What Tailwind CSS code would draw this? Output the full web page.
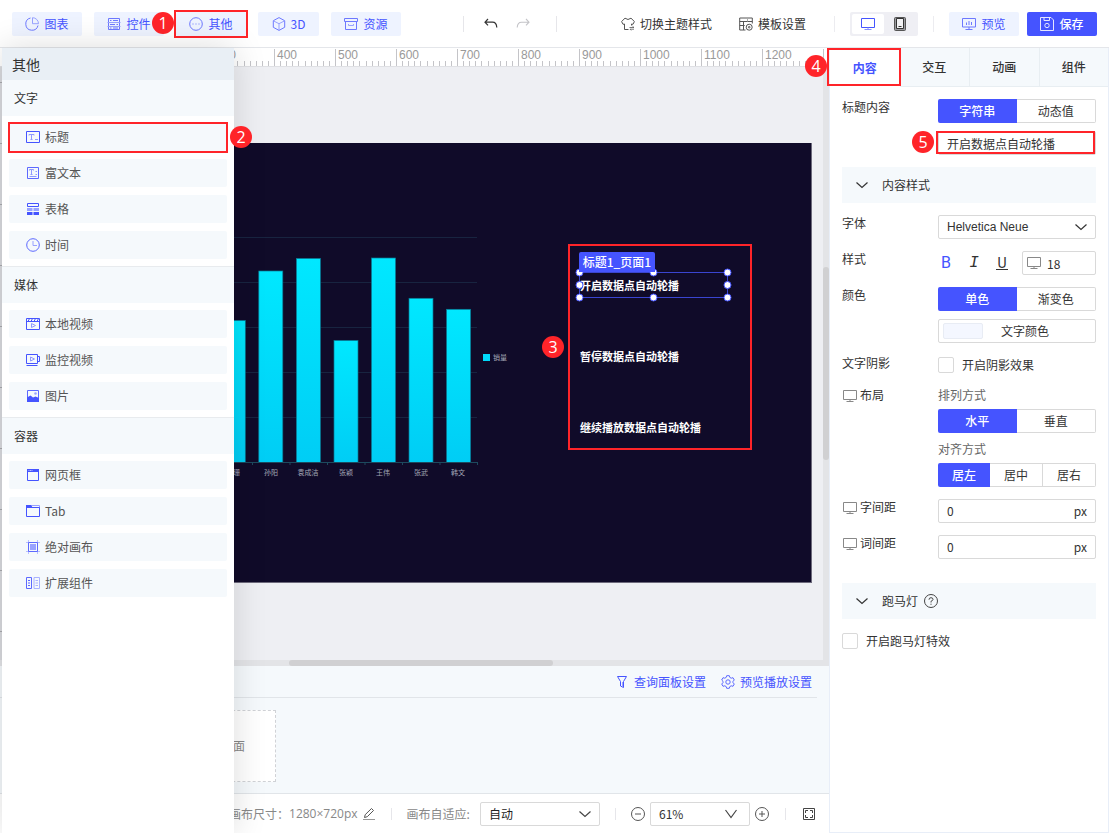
<!DOCTYPE html>
<html lang="zh-CN">
<head>
    <meta charset="UTF-8">
    <meta name="viewport" content="width=device-width, initial-scale=1.0">
    <title>大屏编辑器</title>
    <script src="https://cdn.jsdelivr.net/npm/@tailwindcss/browser@4"></script>
</head>
<body class="h-screen flex flex-col overflow-hidden bg-white text-xs leading-4 text-[#333] font-['Noto_Sans_CJK_SC',sans-serif]">

    <!-- Top toolbar -->
    <header class="h-12 shrink-0 flex items-center px-3 border-b border-[#e4e6ea]">
        <nav class="flex gap-3">
            <button class="w-[70px] h-6 flex items-center justify-center gap-[5px] rounded-xs bg-[#eef3ff] text-[#4554ff]">
                <svg class="size-[14px]" viewBox="0 0 14 14" fill="none" stroke="#6d78ff"><path d="M5.500 1A6.200 6.200 0 1 0 13 8.500"/><path d="M7.500.7v6h6A6 6 0 0 0 7.500.7z" stroke="#98a2ff"/></svg>
                图表
            </button>
            <button class="w-[70px] h-6 flex items-center justify-center gap-[5px] rounded-xs bg-[#eef3ff] text-[#4554ff]">
                <svg class="size-[14px]" viewBox="0 0 14 14" fill="none" stroke="#6d78ff"><path d="M1.500 1.500h11v11h-11z"/><path d="M.5 5.500h13M.5 9.500h13" stroke="#98a2ff"/><path d="M3 3.500h1.500M6 3.500h5M3 7.500h5M9.500 7.500H11M3 11h1.500M6 11h5"/></svg>
                控件
            </button>
            <div class="relative">
                <button class="w-[70px] h-6 flex items-center justify-center gap-[5px] rounded-xs bg-[#eef3ff] text-[#4554ff]">
                    <svg class="size-[14px]" viewBox="0 0 14 14" fill="none" stroke="#6d78ff"><circle cx="7" cy="7" r="6.300"/><path d="M3.500 7h1M6.500 7h1M9.500 7h1"/></svg>
                    其他
                </button>
                <span class="absolute -inset-0.5 border-2 border-[#ff2429] pointer-events-none"></span>
                <span class="absolute right-[72px] top-0 size-[22px] rounded-full bg-[#ff2429] text-white text-base leading-[22px] text-center font-['Open_Sans',sans-serif]">1</span>
            </div>
            <button class="w-[61px] h-6 flex items-center justify-center gap-[5px] rounded-xs bg-[#eef3ff] text-[#4554ff]">
                <svg class="size-[14px]" viewBox="0 0 14 14" fill="none" stroke="#6d78ff"><path d="M7 .6l5.700 3.100v6.600L7 13.400 1.300 10.300V3.700z"/><path d="M1.500 3.900L7 6.700l5.500-2.800M7 6.700v6.500" stroke="#98a2ff"/></svg>
                3D
            </button>
            <button class="w-[70px] h-6 flex items-center justify-center gap-[5px] rounded-xs bg-[#eef3ff] text-[#4554ff]">
                <svg class="size-[14px]" viewBox="0 0 14 14" fill="none" stroke="#6d78ff"><path d="M.5 1.500h13v3H.5z"/><path d="M1.500 4.500v8h11v-8"/><path d="M4.500 7v1.500h5V7" stroke="#98a2ff"/></svg>
                资源
            </button>
        </nav>

        <span class="ml-[62px] w-px h-4 bg-[#e6e6ea]"></span>
        <button class="ml-5" aria-label="撤销"><svg class="size-[14px]" viewBox="0 0 14 14" fill="none" stroke="#333" stroke-width="1.200"><path d="M4 2L1 5.200l3 3.200M1 5.200h7.500q4 0 4.300 5.300"/></svg></button>
        <button class="ml-[18px]" aria-label="重做"><svg class="size-[14px]" viewBox="0 0 14 14" fill="none" stroke="#c4c4c8" stroke-width="1.100"><path d="M10 2l3 3.200-3 3.200M13 5.200H5.500q-4 0-4.300 5.300"/></svg></button>
        <span class="ml-[26px] w-px h-4 bg-[#e6e6ea]"></span>

        <div class="ml-auto flex items-center">
            <button class="flex items-center gap-[5px]">
                <svg class="size-[14px]" viewBox="0 0 14 14" fill="none" stroke="#555"><path d="M7.500 12.500h-4V7L2 7.300.6 4.500 4 1.200Q7 3.800 10 1.200l3.400 3.300L12 7.300 10.500 7v1.500"/><path d="M8.500 10.500h4.500l-1.500-1.300M13 12.200H9l1.200 1.200" stroke-width=".8"/></svg>
                切换主题样式
            </button>
            <button class="ml-[27px] flex items-center gap-[5px]">
                <svg class="size-[14px]" viewBox="0 0 14 14" fill="none" stroke="#555"><path d="M6.500 13H.7V1h12.600v5.500M.7 4.500h12.600M4.500 4.500V13M.7 8.500h5"/><path d="M8.500 1v3.500" stroke="#aaa"/><circle cx="10.200" cy="10.200" r="3"/><circle cx="10.200" cy="10.200" r=".8"/></svg>
                模板设置
            </button>
            <span class="ml-7 w-px h-4 bg-[#ececf0]"></span>
            <div class="ml-[15px] h-6 w-[68px] p-0.5 flex rounded-xs bg-[#efeff4]">
                <button class="w-8 flex items-center justify-center rounded-xs bg-white" aria-label="桌面端"><svg class="size-[14px]" viewBox="0 0 14 14" fill="none" stroke="#4554ff"><path d="M.5 1.500h13v9H.5z"/><path d="M7 10.500v2M3.500 12.500h7" stroke="#8791ff"/></svg></button>
                <button class="w-8 flex items-center justify-center" aria-label="移动端"><svg class="size-[14px]" viewBox="0 0 14 14" fill="none" stroke="#555"><rect x="1.500" y=".5" width="11" height="13" rx="1" fill="#9a9a9e"/><path d="M3.500 1.500h7v10h-7z" fill="#f2f2f4" stroke="#333"/><path d="M5.500 9.500h3" stroke="#333"/></svg></button>
            </div>
            <span class="ml-[15px] w-px h-4 bg-[#ececf0]"></span>
            <button class="ml-[15px] w-[70px] h-6 flex items-center justify-center gap-[5px] rounded-xs bg-[#eef3ff] text-[#4554ff]">
                <svg class="size-[14px]" viewBox="0 0 14 14" fill="none" stroke="#6d78ff"><path d="M.5 1.500h13v8.500H.5zM7 10v2.500M3.500 12.500h7"/><path d="M4.500 5.500v2.500M7 4v4M9.500 5v3"/></svg>
                预览
            </button>
            <button class="ml-2 w-[70px] h-6 flex items-center justify-center gap-[5px] rounded-xs bg-[#4554ff] text-white font-medium">
                <svg class="size-[14px]" viewBox="0 0 14 14" fill="none" stroke="#e4e6ff"><path d="M.5.5H11L13.500 3v10.500H.5z"/><path d="M4 .5V3.500h5.500V.5"/><circle cx="7" cy="8.500" r="2.200"/></svg>
                保存
            </button>
        </div>
    </header>

    <div class="relative flex-1 min-h-0 flex">

        <!-- Component menu, opened over the canvas -->
        <aside class="absolute z-10 left-0.5 top-0 bottom-0 w-[232px] bg-white shadow-[0_0_32px_rgba(0,0,0,0.14)]">
            <h2 class="h-8 flex items-center pl-2.5 bg-[#e9eff5] text-sm">其他</h2>
            <section class="pb-[7px] border-b border-[#e8ebee]">
                <h3 class="h-9 flex items-center pl-3 bg-[#f5f9fc]">文字</h3>
                <ul class="mt-[7px] mx-[7px] flex flex-col gap-2 text-[#555]">
                    <li class="relative">
                        <button class="w-full h-7 flex items-center gap-[5px] pl-[17px] rounded-xs bg-[#f5f9fc]">
                            <svg class="size-[14px]" viewBox="0 0 14 14" fill="none" stroke="#4554ff"><path d="M.5 1.500h13v11H.5z"/><path d="M3 5.500v-1h5v1M5.500 4.500v5M4.500 9.500h2M9 9.500h3" stroke="#8f99ff"/></svg>
                            标题
                        </button>
                        <span class="absolute -left-px -right-px -top-px -bottom-0.5 border-2 border-[#ff2429] pointer-events-none"></span>
                        <span class="absolute left-[221px] top-[3px] size-[22px] rounded-full bg-[#ff2429] text-white text-base leading-[22px] text-center font-['Open_Sans',sans-serif]">2</span>
                    </li>
                    <li><button class="w-full h-7 flex items-center gap-[5px] pl-[17px] rounded-xs bg-[#f5f9fc]">
                        <svg class="size-[14px]" viewBox="0 0 14 14" fill="none" stroke="#5d69ff"><path d="M1.500 1.500h11v11h-11z"/><path d="M3.500 4.500v-1h4v1M5.500 3.500v5M4.500 8.500h2M9.500 5.500h1.500M9.500 8.500h1.500M3.500 10.500h7" stroke="#8f99ff"/></svg>
                        富文本
                    </button></li>
                    <li><button class="w-full h-7 flex items-center gap-[5px] pl-[17px] rounded-xs bg-[#f5f9fc]">
                        <svg class="size-[14px]" viewBox="0 0 14 14"><path d="M1.500 1.500h11v3h-11z" fill="none" stroke="#4554ff"/><path d="M1 6h5.500v3H1zM7.500 6H13v3H7.500z" fill="#98a2ff"/><path d="M1 10h5.500v3H1zM7.500 10H13v3H7.500z" fill="#4554ff"/></svg>
                        表格
                    </button></li>
                    <li><button class="w-full h-7 flex items-center gap-[5px] pl-[17px] rounded-xs bg-[#f5f9fc]">
                        <svg class="size-[14px]" viewBox="0 0 14 14" fill="none" stroke="#5d69ff"><circle cx="7" cy="7" r="6.300"/><path d="M7 3v4.500h4" stroke="#98a2ff"/></svg>
                        时间
                    </button></li>
                </ul>
            </section>
            <section class="pb-[7px] border-b border-[#e8ebee]">
                <h3 class="h-9 flex items-center pl-3 bg-[#f5f9fc]">媒体</h3>
                <ul class="mt-[7px] mx-[7px] flex flex-col gap-2 text-[#555]">
                    <li><button class="w-full h-7 flex items-center gap-[5px] pl-[17px] rounded-xs bg-[#f5f9fc]">
                        <svg class="size-[14px]" viewBox="0 0 14 14" fill="none" stroke="#4554ff"><path d="M.5 1.500h13v11H.5zM.5 4.500h13M2 4.500l1.500-3M5 4.500l1.500-3M8 4.500l1.500-3M11 4.500l1.500-3"/><path d="M5.500 6.500l4 2-4 2z" stroke="#8f99ff"/></svg>
                        本地视频
                    </button></li>
                    <li><button class="w-full h-7 flex items-center gap-[5px] pl-[17px] rounded-xs bg-[#f5f9fc]">
                        <svg class="size-[14px]" viewBox="0 0 14 14" fill="none" stroke="#4554ff"><path d="M.5 1.500h11v9H.5zM11.500 3.500h2v5h-2M.5 12.500h11"/><path d="M4.500 4l4 2-4 2z" stroke="#8f99ff"/></svg>
                        监控视频
                    </button></li>
                    <li><button class="w-full h-7 flex items-center gap-[5px] pl-[17px] rounded-xs bg-[#f5f9fc]">
                        <svg class="size-[14px]" viewBox="0 0 14 14"><path d="M1.500 1.500h11v11h-11z" fill="none" stroke="#5d69ff"/><path d="M1 8.500L4.500 6.500 7 8.500l2.500-1L13 9v4H1z" fill="#4554ff"/><circle cx="9.500" cy="4.500" r="1.300" fill="#98a2ff"/></svg>
                        图片
                    </button></li>
                </ul>
            </section>
            <section>
                <h3 class="h-9 flex items-center pl-3 bg-[#f5f9fc]">容器</h3>
                <ul class="mt-[7px] mx-[7px] flex flex-col gap-2 text-[#555]">
                    <li><button class="w-full h-7 flex items-center gap-[5px] pl-[17px] rounded-xs bg-[#f5f9fc]">
                        <svg class="size-[14px]" viewBox="0 0 14 14"><path d="M1.500 1.500h11v11h-11z" fill="none" stroke="#4554ff"/><path d="M1 1h12v3H1z" fill="#4554ff"/><path d="M2.500 2.500h4" stroke="#b9c0ff" stroke-dasharray="1 .5"/></svg>
                        网页框
                    </button></li>
                    <li><button class="w-full h-7 flex items-center gap-[5px] pl-[17px] rounded-xs bg-[#f5f9fc]">
                        <svg class="size-[14px]" viewBox="0 0 14 14"><path d="M6 1.500h7.500V4" fill="none" stroke="#98a2ff"/><path d="M.5 3.500h13v9H.5z" fill="none" stroke="#4554ff"/><path d="M0 1h5.500l1 3H0z" fill="#4554ff"/></svg>
                        Tab
                    </button></li>
                    <li><button class="w-full h-7 flex items-center gap-[5px] pl-[17px] rounded-xs bg-[#f5f9fc]">
                        <svg class="size-[14px]" viewBox="0 0 14 14"><path d="M2.500 0v14M11.500 0v14M0 2.500h14M0 11.500h14" stroke="#b9c0ff"/><path d="M2.500 2.500h9v9h-9z" fill="#f5f9fc" stroke="#5d69ff"/><path d="M4 4h6v6H4z" fill="#98a2ff"/></svg>
                        绝对画布
                    </button></li>
                    <li><button class="w-full h-7 flex items-center gap-[5px] pl-[17px] rounded-xs bg-[#f5f9fc]">
                        <svg class="size-[14px]" viewBox="0 0 14 14" fill="none"><path d="M.5 1.500h5v11h-5zM2 4.500h2M2 7h2M2 9.500h2" stroke="#5d69ff"/><path d="M8 1.500h5.500v11H8zM9.500 4.500H12M9.500 7H12M9.500 9.500H12" stroke="#a9b2ff"/></svg>
                        扩展组件
                    </button></li>
                </ul>
            </section>
        </aside>

        <!-- Canvas column -->
        <main class="relative flex-1 min-w-0 flex flex-col">
            <div class="h-[19px] shrink-0 overflow-hidden border-b border-[#dfe0e4] bg-white">
                <svg id="ruler" class="h-full w-full font-['Liberation_Sans',sans-serif]" fill="#999"></svg>
            </div>

            <div class="relative flex-1 min-h-0 overflow-hidden bg-[#eeeff3]">
                <!-- left ruler edge -->
                <div class="absolute left-0 inset-y-0 w-0.5 bg-[repeating-linear-gradient(to_bottom,#d9dade_0_15px,#a9aaae_15px_16px,#d9dade_16px_61px)]"></div>

                <div class="absolute left-[31px] top-[76px] w-[781px] h-[440px] bg-[#100b29] border-r border-b border-[#6d6a7c]">
                    <svg class="absolute left-0 top-0 w-[781px] h-[439px]" viewBox="31 143 781 439" font-size="7" fill="#a3a6b5" text-anchor="middle">
                        <defs>
                            <linearGradient id="bar" x1="0" y1="0" x2="0" y2="1"><stop offset="0" stop-color="#00e8ff"/><stop offset="1" stop-color="#00cdf5"/></linearGradient>
                        </defs>
                        <g stroke="#182440"><path d="M60 237.500h417M60 282.500h417M60 327.500h417M60 372.500h417M60 417.500h417"/></g>
                        <g fill="url(#bar)" stroke="#087a94" stroke-width=".7">
                            <rect x="221.300" y="320.500" width="24" height="142"/>
                            <rect x="258.800" y="271" width="24" height="191.500"/>
                            <rect x="296.400" y="258.500" width="24" height="204"/>
                            <rect x="334" y="340.500" width="24" height="122"/>
                            <rect x="371.500" y="258" width="24" height="204.500"/>
                            <rect x="409" y="298.300" width="24" height="164.200"/>
                            <rect x="446.600" y="309.300" width="24" height="153.200"/>
                        </g>
                        <path d="M60 462.500h417.500M252.500 462v3M290 462v3M327.500 462v3M365 462v3M402.500 462v3M440 462v3M477.500 462v3" fill="none" stroke="#1d4a5e"/>
                        <text x="233" y="475">李珊</text>
                        <text x="271" y="475">孙阳</text>
                        <text x="308" y="475">袁成洁</text>
                        <text x="346" y="475">张颖</text>
                        <text x="383" y="475">王伟</text>
                        <text x="421" y="475">张武</text>
                        <text x="458" y="475">韩文</text>
                        <rect x="483" y="354" width="7" height="7" fill="#00d9fa"/>
                        <text x="500" y="360">销量</text>
                    </svg>

                    <div class="absolute left-[537px] top-[101px] w-[184px] h-[206px] border-2 border-[#ff2429]"></div>
                    <span class="absolute left-[511px] top-[193px] size-[22px] rounded-full bg-[#ff2429] text-white text-base leading-[22px] text-center font-['Open_Sans',sans-serif]">3</span>

                    <div class="absolute left-[548px] top-[129px] w-[149px] h-[26px] border border-[#3a45d0] text-[11px] leading-6 font-bold text-white">
                        开启数据点自动轮播
                        <svg class="absolute -left-1 -top-1 w-[155px] h-8 overflow-visible" fill="#fff" stroke="#4554ff"><circle cx="3.500" cy="3.500" r="3.500"/><circle cx="77.500" cy="3.500" r="3.500"/><circle cx="151.500" cy="3.500" r="3.500"/><circle cx="3.500" cy="16" r="3.500"/><circle cx="151.500" cy="16" r="3.500"/><circle cx="3.500" cy="28.500" r="3.500"/><circle cx="77.500" cy="28.500" r="3.500"/><circle cx="151.500" cy="28.500" r="3.500"/></svg>
                    </div>
                    <span class="absolute left-[548px] top-[109px] h-5 w-[76px] text-center leading-5 rounded-t-xs bg-[#4554ff] text-white font-medium">标题1_页面1</span>
                    <p class="absolute left-[549px] top-[205px] text-[11px] font-bold text-white">暂停数据点自动轮播</p>
                    <p class="absolute left-[549px] top-[276px] text-[11px] font-bold text-white">继续播放数据点自动轮播</p>
                </div>

                <!-- scrollbars -->
                <div class="absolute right-0 inset-y-0 w-1.5 bg-[#e3e4e7]"><div class="absolute top-[200px] h-[193px] w-full rounded-full bg-[#d0d0d2]"></div></div>
                <div class="absolute left-0 right-1.5 bottom-0 h-1.5 bg-[#e3e4e7]"><div class="absolute left-[289px] h-full w-[264px] rounded-full bg-[#d0d0d2]"></div></div>
            </div>

            <!-- Pages -->
            <div class="h-32 shrink-0 bg-[#f5f9fc] border-b border-[#e1e5e9]">
                <div class="h-8 mr-3 pr-[5px] flex items-center justify-end gap-[15px] border-b border-[#e1e5e9] text-[#4554ff]">
                    <button class="flex items-center gap-[5px]">
                        <svg class="size-[14px]" viewBox="0 0 14 14" fill="none" stroke="#4554ff"><path d="M2.500 1.500h9L8.500 6.500v6l-3-1.500V6.500z"/><path d="M7.500 7v5" stroke="#98a2ff"/></svg>
                        查询面板设置
                    </button>
                    <button class="flex items-center gap-[5px]">
                        <svg class="size-[14px]" viewBox="0 0 14 14" fill="none" stroke="#5d69ff"><path d="M5.700.7h2.600l.5 1.700 1.400.8 1.800-.5 1.300 2.300L12 6.300v1.400L13.300 9 12 11.300l-1.800-.5-1.400.8-.5 1.700H5.700l-.5-1.700-1.400-.8-1.800.5L.7 9 2 7.700V6.300L.7 5 2 2.700l1.800.5 1.400-.8z"/><circle cx="7" cy="7" r="2.200"/></svg>
                        预览播放设置
                    </button>
                </div>
                <button class="mt-3 ml-[166px] w-[110px] h-[72px] border border-dashed border-[#d0d2d6] bg-white text-[#888]">新增页面</button>
            </div>

            <!-- Status bar -->
            <footer class="h-[39px] shrink-0 flex items-center pl-[229px] pr-[13px] text-[#888]">
                <span>画布尺寸：</span>
                <span class="font-['Open_Sans',sans-serif]">1280×720px</span>
                <button class="ml-1" aria-label="编辑尺寸"><svg class="size-[14px]" viewBox="0 0 14 14" fill="none" stroke="#555"><path d="M2.500 10.500l.7-2.800L9.500 1.500l2 2-6.200 6.200z"/><path d="M1 12.500h12" stroke="#999"/></svg></button>
                <span class="ml-[15px] w-px h-3 bg-[#e6e6ea]"></span>
                <label for="fit" class="ml-[15px]">画布自适应:</label>
                <div class="relative ml-2.5">
                    <select id="fit" class="appearance-none w-[120px] h-6 pl-2 border border-[#d9d9d9] rounded-xs bg-white text-[#222]"><option>自动</option></select>
                    <svg class="absolute right-2 top-[5px] size-[14px] pointer-events-none" viewBox="0 0 14 14" fill="none" stroke="#444" stroke-width="1.200"><path d="M1.500 4.500L7 9.500l5.500-5"/></svg>
                </div>
                <span class="ml-[15px] w-px h-3 bg-[#e6e6ea]"></span>
                <div class="ml-auto flex items-center">
                    <button aria-label="缩小"><svg class="size-[14px]" viewBox="0 0 14 14" fill="none" stroke="#555"><circle cx="7" cy="7" r="6.500"/><path d="M4 7h6"/></svg></button>
                    <div class="relative ml-[5px]">
                        <select aria-label="缩放比例" class="appearance-none w-[100px] h-6 pl-2 border border-[#d9d9d9] rounded-xs bg-white text-[#333]"><option>61%</option></select>
                        <svg class="absolute right-3 top-[5px] size-[14px] pointer-events-none" viewBox="0 0 14 14" fill="none" stroke="#444" stroke-width="1.200"><path d="M1.500 3L7 10.500 12.500 3"/></svg>
                    </div>
                    <button class="ml-[5px]" aria-label="放大"><svg class="size-[14px]" viewBox="0 0 14 14" fill="none" stroke="#555"><circle cx="7" cy="7" r="6.500"/><path d="M4 7h6M7 4v6"/></svg></button>
                    <span class="ml-4 w-px h-3 bg-[#e6e6ea]"></span>
                    <button class="ml-4" aria-label="全屏"><svg class="size-[14px]" viewBox="0 0 14 14" fill="none" stroke="#444"><path d="M1.500 1.500h11v11h-11z"/><path d="M3.500 6V3.500H6M8 3.500h2.500V6M10.500 8v2.500H8M6 10.500H3.500V8"/></svg></button>
                </div>
            </footer>
        </main>

        <!-- Property panel -->
        <aside class="w-[280px] shrink-0 border-x border-b border-[#e8eef8] bg-white">
            <div class="h-[39px] grid grid-cols-4 font-medium">
                <div class="relative">
                    <button class="w-full h-full text-[#4554ff] font-bold">内容</button>
                    <span class="absolute -left-[3px] top-0 w-[74px] h-[38px] border-2 border-[#ff2429] pointer-events-none"></span>
                    <span class="absolute -left-[25px] top-[7px] size-[22px] rounded-full bg-[#ff2429] text-white text-base leading-[22px] text-center font-normal font-['Open_Sans',sans-serif]">4</span>
                </div>
                <button class="bg-[#f5f9fc] border-b border-[#e8eef2]">交互</button>
                <button class="bg-[#f5f9fc] border-b border-l border-[#e8eef2]">动画</button>
                <button class="bg-[#f5f9fc] border-b border-l border-[#e8eef2]">组件</button>
            </div>

            <div class="p-3 flex flex-col gap-3">
                <div class="flex">
                    <label for="content" class="w-24 shrink-0">标题内容</label>
                    <div class="flex-1 flex flex-col gap-2">
                        <div class="h-6 flex">
                            <button class="flex-1 rounded-l-xs bg-[#4554ff] text-white font-medium">字符串</button>
                            <button class="flex-1 rounded-r-xs border border-l-0 border-[#d9d9d9]">动态值</button>
                        </div>
                        <div class="relative h-6">
                            <input id="content" type="text" value="开启数据点自动轮播" class="w-full h-6 px-2 border border-[#d9d9d9] rounded-xs">
                            <span class="absolute -left-0.5 right-px top-0 bottom-px border-2 border-[#ff2429] pointer-events-none"></span>
                            <span class="absolute -left-[26px] top-0 size-[22px] rounded-full bg-[#ff2429] text-white text-base leading-[22px] text-center font-['Open_Sans',sans-serif]">5</span>
                        </div>
                    </div>
                </div>

                <button class="h-9 flex items-center gap-[13px] pl-[13px] bg-[#f5f9fc]">
                    <svg class="size-[14px]" viewBox="0 0 14 14" fill="none" stroke="#333" stroke-width="1.200"><path d="M1.500 4.500L7 9.500l5.500-5"/></svg>
                    内容样式
                </button>

                <div class="flex">
                    <label for="family" class="w-24 shrink-0">字体</label>
                    <div class="relative flex-1">
                        <select id="family" class="appearance-none w-full h-6 pl-2 border border-[#d9d9d9] rounded-xs bg-white font-['Liberation_Sans',sans-serif]"><option>Helvetica Neue</option></select>
                        <svg class="absolute right-2 top-[5px] size-[14px] pointer-events-none" viewBox="0 0 14 14" fill="none" stroke="#333" stroke-width="1.200"><path d="M1.500 4.500L7 9.500l5.500-5"/></svg>
                    </div>
                </div>

                <div class="flex">
                    <label for="size" class="w-24 shrink-0">样式</label>
                    <div class="flex-1 flex items-center gap-3 text-base">
                        <button class="w-4 text-[#4554ff] font-['Roboto',sans-serif]" aria-label="加粗">B</button>
                        <button class="w-4 italic font-['Liberation_Mono',monospace]" aria-label="斜体">I</button>
                        <button class="w-4 flex justify-center font-['Roboto',sans-serif] text-sm leading-3" aria-label="下划线"><span class="w-3 border-b border-[#333]">U</span></button>
                        <div class="relative flex-1 text-xs">
                            <svg class="absolute left-[5px] top-[5px] size-[14px]" viewBox="0 0 14 14" fill="none" stroke="#888"><path d="M.5 1.500h13v9H.5zM7 10.500v2M3.500 12.500h7"/></svg>
                            <input id="size" type="text" value="18" class="w-full h-6 pl-6 border border-[#d9d9d9] rounded-xs">
                        </div>
                    </div>
                </div>

                <div class="flex">
                    <span class="w-24 shrink-0">颜色</span>
                    <div class="flex-1 flex flex-col gap-2">
                        <div class="h-6 flex">
                            <button class="flex-1 rounded-l-xs bg-[#4554ff] text-white font-medium">单色</button>
                            <button class="flex-1 rounded-r-xs border border-l-0 border-[#d9d9d9]">渐变色</button>
                        </div>
                        <button class="h-6 flex items-center pl-1 border border-[#d9d9d9] rounded-xs">
                            <span class="w-10 h-4 border border-[#e8ecf4] rounded-xs bg-[#f4f7ff]"></span>
                            <span class="ml-[18px]">文字颜色</span>
                        </button>
                    </div>
                </div>

                <div class="h-5 flex">
                    <span class="w-24 shrink-0">文字阴影</span>
                    <label class="h-5 flex items-center gap-2"><input type="checkbox" class="appearance-none size-4 border border-[#d9d9d9] rounded-xs">开启阴影效果</label>
                </div>

                <div class="flex">
                    <span class="w-24 shrink-0 flex gap-[3px] items-start">
                        <svg class="mt-0.5 ml-px size-[14px]" viewBox="0 0 14 14" fill="none" stroke="#888"><path d="M.5 1.500h13v9H.5zM7 10.500v2M3.500 12.500h7"/></svg>
                        布局
                    </span>
                    <div class="flex-1 flex flex-col">
                        <p class="text-[#666]">排列方式</p>
                        <div class="mt-1.5 h-6 flex">
                            <button class="flex-1 rounded-l-xs bg-[#4554ff] text-white font-medium">水平</button>
                            <button class="flex-1 rounded-r-xs border border-l-0 border-[#d9d9d9]">垂直</button>
                        </div>
                        <p class="mt-2 text-[#666]">对齐方式</p>
                        <div class="mt-1.5 h-6 flex">
                            <button class="flex-1 rounded-l-xs bg-[#4554ff] text-white font-medium">居左</button>
                            <button class="flex-1 border border-l-0 border-[#d9d9d9]">居中</button>
                            <button class="flex-1 rounded-r-xs border border-l-0 border-[#d9d9d9]">居右</button>
                        </div>
                    </div>
                </div>

                <div class="flex">
                    <label for="letter" class="w-24 shrink-0 flex gap-[3px] items-start">
                        <svg class="mt-0.5 ml-px size-[14px]" viewBox="0 0 14 14" fill="none" stroke="#888"><path d="M.5 1.500h13v9H.5zM7 10.500v2M3.500 12.500h7"/></svg>
                        字间距
                    </label>
                    <div class="flex-1 min-w-0 h-6 flex items-center px-2 border border-[#d9d9d9] rounded-xs">
                        <input id="letter" type="text" value="0" class="flex-1 min-w-0">px
                    </div>
                </div>
                <div class="flex">
                    <label for="word" class="w-24 shrink-0 flex gap-[3px] items-start">
                        <svg class="mt-0.5 ml-px size-[14px]" viewBox="0 0 14 14" fill="none" stroke="#888"><path d="M.5 1.500h13v9H.5zM7 10.500v2M3.500 12.500h7"/></svg>
                        词间距
                    </label>
                    <div class="flex-1 min-w-0 h-6 flex items-center px-2 border border-[#d9d9d9] rounded-xs">
                        <input id="word" type="text" value="0" class="flex-1 min-w-0">px
                    </div>
                </div>

                <button class="mt-3 h-9 flex items-center pl-[13px] bg-[#f5f9fc]">
                    <svg class="size-[14px]" viewBox="0 0 14 14" fill="none" stroke="#333" stroke-width="1.200"><path d="M1.500 4.500L7 9.500l5.500-5"/></svg>
                    <span class="ml-[13px]">跑马灯</span>
                    <svg class="ml-1.5 size-[14px]" viewBox="0 0 14 14" fill="none" stroke="#444"><circle cx="7" cy="7" r="6.500"/><path d="M5 5.700Q5 3.700 7 3.700t2 1.700Q9 6.500 7 7.300v1.200M7 9.700v1.100"/></svg>
                </button>
                <label class="h-5 flex items-center gap-2"><input type="checkbox" class="appearance-none size-4 border border-[#d9d9d9] rounded-xs">开启跑马灯特效</label>
            </div>
        </aside>
    </div>

    <script>
        // Draw the horizontal ruler: one tick per 10 units, a label per 100.
        // Starts at 300, everything before that is under the component menu.
        const ruler = document.getElementById('ruler');
        const scale = 0.61;
        let marks = '';
        for (let unit = 300; unit <= 1300; unit += 10) {
            const x = Math.round(30 + unit * scale);
            const major = unit % 100 === 0;
            marks += `<rect x="${x}" y="${major ? 1 : 13}" width="1" height="${major ? 18 : 6}" fill="#c4c4c8"/>`;
            if (major && unit < 1300) {
                marks += `<text x="${x + 3}" y="11" font-size="12">${unit}</text>`;
            }
        }
        ruler.innerHTML = marks;
    </script>
</body>
</html>
